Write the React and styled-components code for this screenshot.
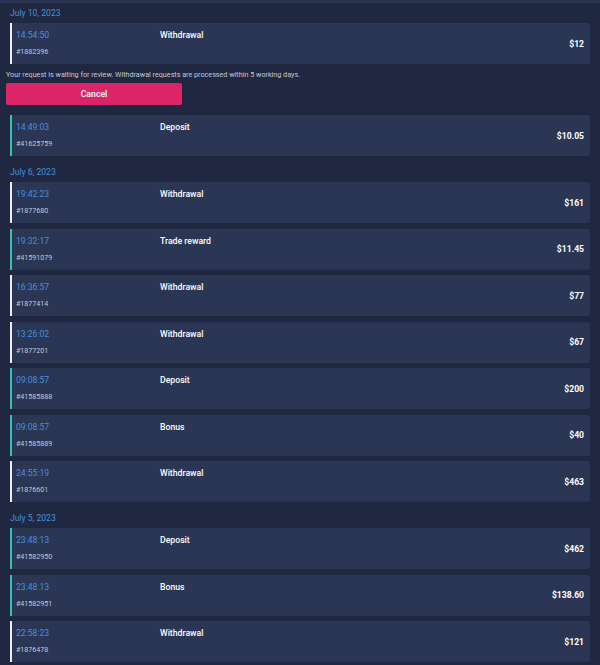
import React from "react";
import styled, { createGlobalStyle } from "styled-components";

const Global = createGlobalStyle`
  html, body { margin: 0; padding: 0; background: #1f2741; }
  body { font-family: Roboto, "Liberation Sans", sans-serif; -webkit-font-smoothing: antialiased; }
`;

const Page = styled.div`
  width: 600px;
  min-height: 665px;
  background: #1f2741;
  overflow: hidden;
`;

const TopBar = styled.div`
  height: 3px;
  background: #2a3350;
`;

const DateHeader = styled.div`
  padding: ${(p) => (p.$first ? "3.5px" : "9.5px")} 10px 4.5px;
  font-size: 8.6px;
  line-height: 12px;
  color: #4a8fd8;
`;

const List = styled.div`
  display: flex;
  flex-direction: column;
  gap: 5.5px;
  padding: 0 10px;
`;

const Card = styled.div`
  display: flex;
  align-items: flex-start;
  height: 41px;
  box-sizing: border-box;
  padding: 6px 6px 6px 4px;
  background: #2b3554;
  border-left: 2px solid ${(p) => (p.$teal ? "#35c3b1" : "#eceef3")};
  border-radius: 0 3px 3px 0;
`;

const Left = styled.div`
  width: 144px;
  display: flex;
  flex-direction: column;
  gap: 5px;
`;

const Time = styled.div`
  font-size: 8.6px;
  line-height: 12px;
  color: #4a8fd8;
`;

const Id = styled.div`
  font-size: 7.1px;
  line-height: 12px;
  color: #c3c8d4;
`;

const Type = styled.div`
  flex: 1;
  font-size: 8.7px;
  line-height: 12px;
  font-weight: 500;
  color: #ffffff;
`;

const Amount = styled.div`
  align-self: center;
  font-size: 8.6px;
  font-weight: 700;
  color: #ffffff;
`;

const Notice = styled.div`
  padding: 0 6px;
  margin-top: 6px;
  font-size: 7.2px;
  line-height: 10px;
  color: #c5cad6;
`;

const CancelButton = styled.button`
  display: block;
  margin: 3px 6px 10px;
  width: 176px;
  height: 22px;
  border: none;
  border-radius: 2px;
  background: #dc2568;
  color: #ffffff;
  font-family: Roboto, "Liberation Sans", sans-serif;
  font-size: 8.7px;
  font-weight: 500;
  padding: 0;
`;

const Row = ({ t }) => (
  <Card $teal={t.type !== "Withdrawal"}>
    <Left>
      <Time>{t.time}</Time>
      <Id>{t.id}</Id>
    </Left>
    <Type>{t.type}</Type>
    <Amount>{t.amount}</Amount>
  </Card>
);

const g2 = [
  { time: "19:42:23", type: "Withdrawal", id: "#1877680", amount: "$161" },
  { time: "19:32:17", type: "Trade reward", id: "#41591079", amount: "$11.45" },
  { time: "16:36:57", type: "Withdrawal", id: "#1877414", amount: "$77" },
  { time: "13:26:02", type: "Withdrawal", id: "#1877201", amount: "$67" },
  { time: "09:08:57", type: "Deposit", id: "#41585888", amount: "$200" },
  { time: "09:08:57", type: "Bonus", id: "#41585889", amount: "$40" },
  { time: "24:55:19", type: "Withdrawal", id: "#1876601", amount: "$463" },
];

const g3 = [
  { time: "23:48:13", type: "Deposit", id: "#41582950", amount: "$462" },
  { time: "23:48:13", type: "Bonus", id: "#41582951", amount: "$138.60" },
  { time: "22:58:23", type: "Withdrawal", id: "#1876478", amount: "$121" },
];

export default function App() {
  return (
    <Page>
      <Global />
      <TopBar />
      <DateHeader $first>July 10, 2023</DateHeader>
      <List>
        <Row t={{ time: "14:54:50", type: "Withdrawal", id: "#1882396", amount: "$12" }} />
      </List>
      <Notice>
        Your request is waiting for review. Withdrawal requests are processed within 5 working days.
      </Notice>
      <CancelButton>Cancel</CancelButton>
      <List>
        <Row t={{ time: "14:49:03", type: "Deposit", id: "#41625759", amount: "$10.05" }} />
      </List>
      <DateHeader>July 6, 2023</DateHeader>
      <List>
        {g2.map((t, i) => (
          <Row key={i} t={t} />
        ))}
      </List>
      <DateHeader>July 5, 2023</DateHeader>
      <List>
        {g3.map((t, i) => (
          <Row key={i} t={t} />
        ))}
      </List>
    </Page>
  );
}
